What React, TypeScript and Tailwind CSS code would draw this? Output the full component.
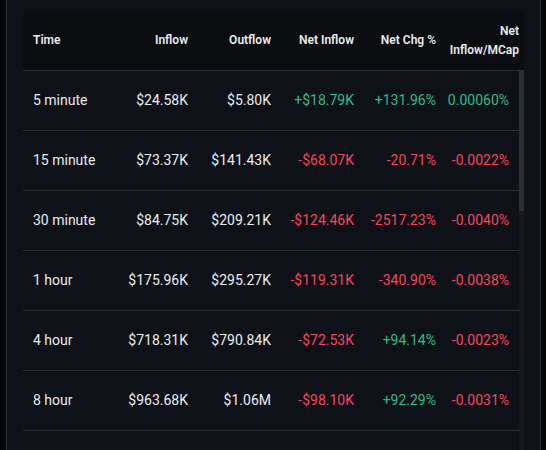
import React from "react";

type Row = {
  time: string;
  inflow: string;
  outflow: string;
  net: string;
  chg: string;
  mcap: string;
};

const rows: Row[] = [
  { time: "5 minute", inflow: "$24.58K", outflow: "$5.80K", net: "+$18.79K", chg: "+131.96%", mcap: "0.00060%" },
  { time: "15 minute", inflow: "$73.37K", outflow: "$141.43K", net: "-$68.07K", chg: "-20.71%", mcap: "-0.0022%" },
  { time: "30 minute", inflow: "$84.75K", outflow: "$209.21K", net: "-$124.46K", chg: "-2517.23%", mcap: "-0.0040%" },
  { time: "1 hour", inflow: "$175.96K", outflow: "$295.27K", net: "-$119.31K", chg: "-340.90%", mcap: "-0.0038%" },
  { time: "4 hour", inflow: "$718.31K", outflow: "$790.84K", net: "-$72.53K", chg: "+94.14%", mcap: "-0.0023%" },
  { time: "8 hour", inflow: "$963.68K", outflow: "$1.06M", net: "-$98.10K", chg: "+92.29%", mcap: "-0.0031%" },
];

const color = (v: string) =>
  v.startsWith("-") ? "text-[#f6465d]" : "text-[#2ebd85]";

export default function App() {
  return (
    <div
      className="flex h-[450px] w-[546px] overflow-hidden bg-[#030304]"
      style={{ fontFamily: "Roboto, 'Noto Sans', sans-serif" }}
    >
      <div className="ml-[6px] flex h-full w-[535px] flex-col border-x border-[#2b2f37] bg-[#0f1118] pl-[16px] pt-[11px]">
        <div className="flex w-[501px] flex-1 flex-col">
          {/* header */}
          <div className="grid h-[60px] grid-cols-[83px_82px_83px_83px_82px_83px_5px] items-center border-b border-[#2b2f37] bg-[#0b0d11] text-[12px] font-semibold leading-[19px] text-[#eaecef]">
            <div className="pl-[10px]">Time</div>
            <div className="text-right">Inflow</div>
            <div className="text-right">Outflow</div>
            <div className="text-right">Net Inflow</div>
            <div className="text-right">Net Chg %</div>
            <div className="text-right">
              Net
              <br />
              Inflow/MCap
            </div>
            <div />
          </div>
          {/* body */}
          <div className="flex flex-1">
            <div className="w-[496px]">
              {rows.map((r) => (
                <div
                  key={r.time}
                  className="grid h-[60px] grid-cols-[83px_82px_83px_83px_82px_83px] items-center border-b border-[#2b2f37] text-[14px] text-[#eaecef]"
                >
                  <div className="pl-[10px]">{r.time}</div>
                  <div className="text-right">{r.inflow}</div>
                  <div className="text-right">{r.outflow}</div>
                  <div className={`text-right ${color(r.net)}`}>{r.net}</div>
                  <div className={`text-right ${color(r.chg)}`}>{r.chg}</div>
                  <div className={`pr-[10px] text-right ${color(r.mcap)}`}>{r.mcap}</div>
                </div>
              ))}
            </div>
            <div className="flex w-[5px] flex-col bg-[#15181f]">
              <div className="h-[140px] bg-[#2b2f36]" />
            </div>
          </div>
        </div>
      </div>
    </div>
  );
}
